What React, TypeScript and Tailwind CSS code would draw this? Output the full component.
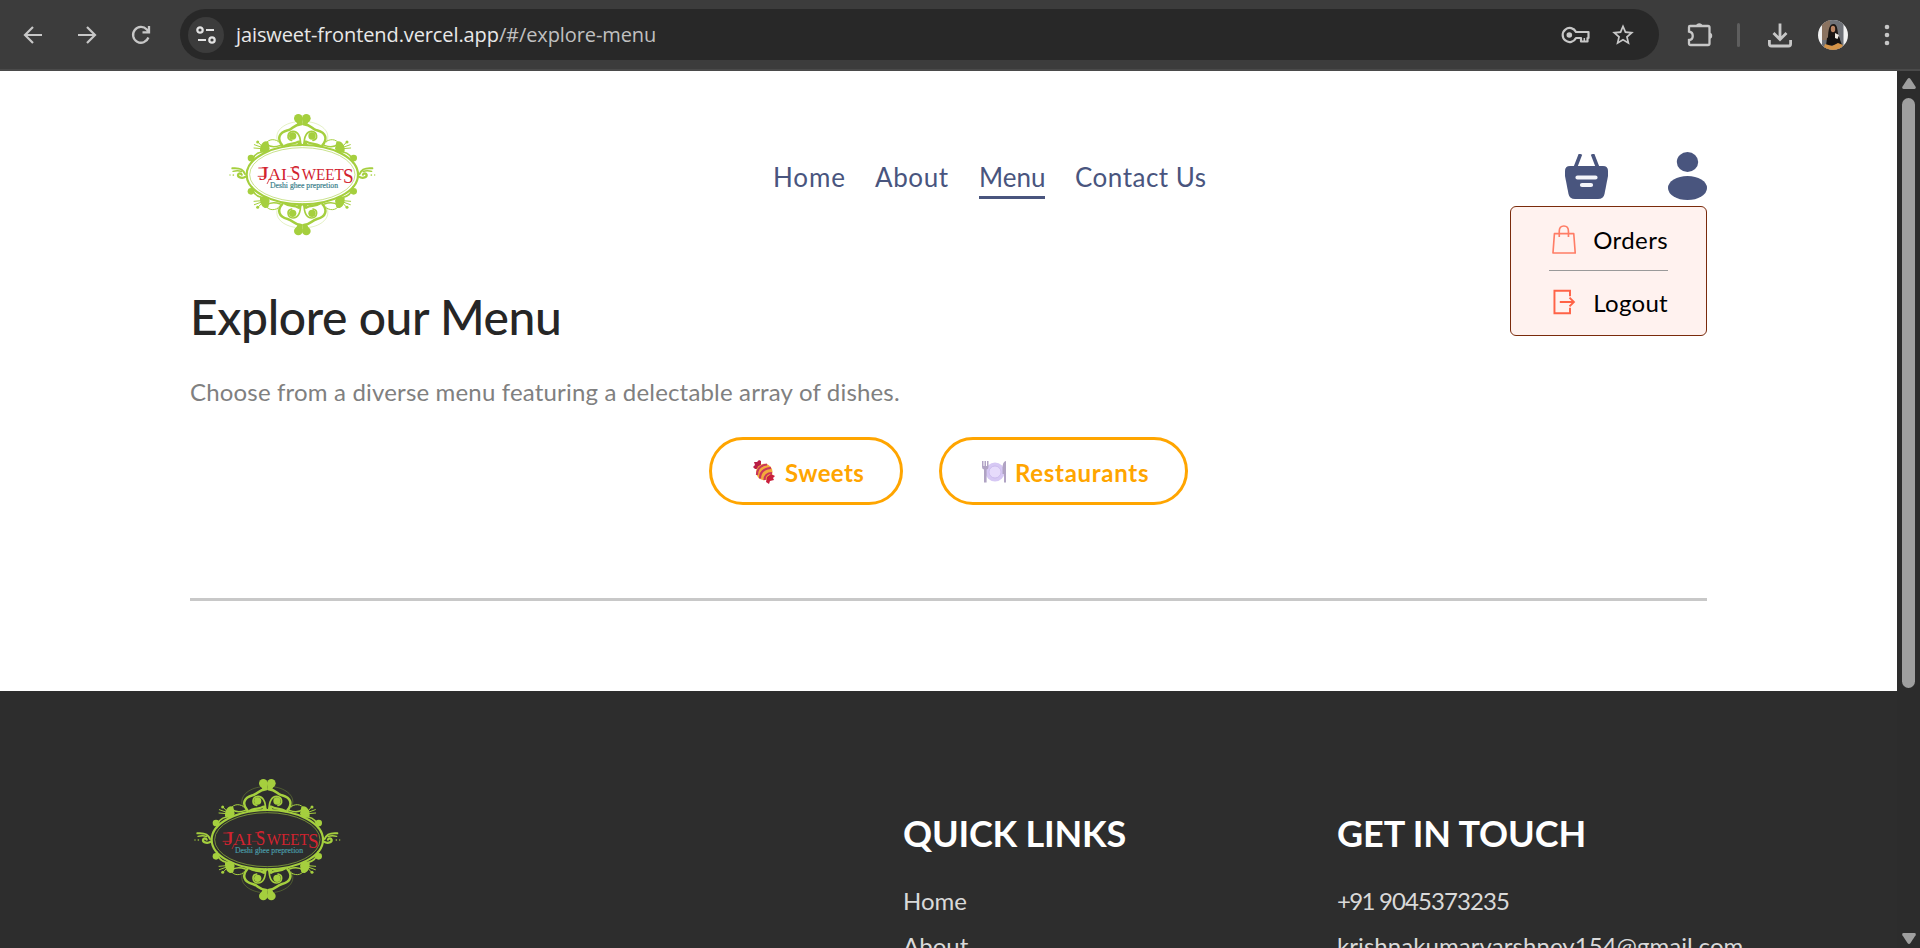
import React from "react";

const QUADRANTS = ["", "scale(-1 1)", "scale(1 -1)", "scale(-1 -1)"];

function Ornament() {
  return (
    <g fill="none" stroke="#a5cf3e" strokeLinecap="round">
      <circle cx="12" cy="-169" r="13" fill="#a5cf3e" stroke="none" />
      <path d="M0 -166 L20 -163 L14 -149 L0 -149 Z" fill="#a5cf3e" stroke="none" />
      <path d="M4 -151 C28 -149 26 -138 44 -133 C72 -126 76 -106 60 -88" strokeWidth="7.500" />
      <path d="M22 -158 C54 -154 90 -130 72 -96" strokeWidth="1.500" opacity=".6" />
      <path d="M5 -88 C5 -112 10 -129 28 -130 C46 -129 48 -106 32 -103" strokeWidth="5" />
      <circle cx="29" cy="-116" r="11" fill="#a5cf3e" stroke="none" />
      <path d="M12 -99 C24 -90 38 -97 54 -86" strokeWidth="7" />
      <path d="M0 -90 L9 -104 L17 -88 Z" fill="#a5cf3e" stroke="none" />
      <path d="M66 -88 C82 -82 96 -82 108 -92" strokeWidth="4.500" />
      <path d="M72 -100 C88 -110 108 -106 114 -84" strokeWidth="3" />
      <path d="M102 -98 C114 -106 128 -92 127 -70 C116 -60 102 -66 98 -78 Z" fill="#a5cf3e" stroke="none" />
      <path d="M122 -82 L144 -90 M122 -86 L134 -99 M122 -78 L145 -80" strokeWidth="3" />
      <circle cx="134" cy="-98" r="4.500" fill="#a5cf3e" stroke="none" />
      <path d="M122 -68 C136 -66 148 -56 152 -36" strokeWidth="5" />
      <circle cx="154" cy="-50" r="10" fill="#a5cf3e" stroke="none" />
    </g>
  );
}

function Logo({ teal }: { teal: string }) {
  return (
    <svg className="block h-[135px] w-[165px] shrink-0" viewBox="-247 -209 495 405">
      <g fill="none" stroke="#a5cf3e">
        <ellipse rx="167" ry="89" strokeWidth="6.500" />
        <ellipse rx="158" ry="81" strokeWidth="1.800" />
      </g>
      {QUADRANTS.map((t) => (
        <g key={t} transform={t}>
          <Ornament />
        </g>
      ))}
      {["", "scale(-1 1)"].map((t) => (
        <g key={t} transform={t} fill="none" stroke="#a5cf3e" strokeLinecap="round">
          <path d="M170 6 C178 12 193 10 193 1 C192 -5 184 -5 182 0" strokeWidth="7" />
          <path d="M172 -2 C178 -18 190 -21 210 -19" strokeWidth="6" />
          <path d="M182 -9 C192 -14 200 -12 208 -10" strokeWidth="4" />
          <circle cx="207" cy="1" r="2.500" fill="#a5cf3e" stroke="none" />
          <circle cx="217" cy="1" r="2" fill="#a5cf3e" stroke="none" />
        </g>
      ))}
      <g fontFamily="Liberation Serif, serif" fill="#d2232f">
        <text x="-130" y="16" fontSize="58" textLength="30" lengthAdjust="spacingAndGlyphs">J</text>
        <text x="-102" y="16" fontSize="52" textLength="56" lengthAdjust="spacingAndGlyphs">AI</text>
        <text x="-34" y="17" fontSize="62" textLength="28" lengthAdjust="spacingAndGlyphs">S</text>
        <text x="-2" y="16" fontSize="52" textLength="126" lengthAdjust="spacingAndGlyphs">WEET</text>
        <text x="122" y="26" fontSize="66" textLength="32" lengthAdjust="spacingAndGlyphs">S</text>
        <path d="M-132 -20 H-104 M-134 5 H-112 M-98 12 L-106 28 M-36 -21 H-10" fill="none" stroke="#d2232f" strokeWidth="2.500" />
        <path d="M-46 5 H-30" fill="none" stroke="#d2232f" strokeWidth="1.500" />
      </g>
      <text x="-97" y="41" fontSize="24" fontFamily="Liberation Serif, serif" fill={teal} stroke={teal} strokeWidth=".6" textLength="204" lengthAdjust="spacingAndGlyphs">
        Deshi ghee prepretion
      </text>
    </svg>
  );
}

function BrowserBar() {
  return (
    <div className="flex h-[71px] w-full shrink-0 items-center border-b-2 border-[#4a4a4a] bg-[#3c3c3c] text-[#c7c7c7]">
      <svg className="ml-[22px] size-[22px]" viewBox="0 0 22 22" fill="none" stroke="currentColor" strokeWidth="2.200">
        <path d="M20 11H3.500M11 3L3 11L11 19" />
      </svg>
      <svg className="ml-[32px] size-[22px]" viewBox="0 0 22 22" fill="none" stroke="currentColor" strokeWidth="2.200">
        <path d="M2 11H18.500M11 3L19 11L11 19" />
      </svg>
      <svg className="ml-[32px] size-[22px]" viewBox="0 0 22 22" fill="none" stroke="currentColor" strokeWidth="2.300">
        <path d="M18.400 13.500A7.900 7.900 0 1 1 16.800 5.500L18.500 7.500M19 2V8.300H12.500" />
      </svg>
      <div className="ml-[28px] flex h-[51px] w-[1479px] items-center rounded-full bg-[#282828] pl-[8px]">
        <div className="flex size-[36px] items-center justify-center rounded-full bg-[#3c3c3c]">
          <svg className="size-[20px]" viewBox="0 0 20 20" fill="none" stroke="#e3e3e3" strokeWidth="2.200">
            <circle cx="4" cy="5" r="2.700" />
            <path d="M10 5H18M2 15H10" />
            <circle cx="16" cy="15" r="2.700" />
          </svg>
        </div>
        <div className="ml-[12px] whitespace-nowrap font-['Open_Sans','Noto_Sans',sans-serif] text-[20px] leading-[30px] tracking-[-0.1px] text-[#e8e8e8]">
          jaisweet-frontend.vercel.app<span className="text-[#c0c0c0]">/#/explore-menu</span>
        </div>
        <svg className="ml-auto h-[18px] w-[29px]" viewBox="0 0 29 18" fill="none" stroke="#c7c7c7" strokeWidth="2.200">
          <path d="M15 6A7 7 0 1 0 15 12H20V15.500H26.500V12H27.500V6Z" strokeLinejoin="round" />
          <circle cx="8.300" cy="9" r="2.800" fill="#c7c7c7" stroke="none" />
          <path d="M23.300 12V15" strokeWidth="1.500" />
        </svg>
        <svg className="mr-[23px] ml-[20px] size-[26px]" viewBox="0 0 24 24" fill="#c7c7c7">
          <path d="M22 9.240l-7.190-.62L12 2 9.190 8.630 2 9.240l5.460 4.730L5.820 21 12 17.270 18.180 21l-1.630-7.030L22 9.240zM12 15.400l-3.760 2.270 1-4.280-3.320-2.880 4.380-.38L12 6.100l1.710 4.040 4.380.38-3.320 2.880 1 4.280L12 15.400z" />
        </svg>
      </div>
      <svg className="ml-[28px] size-[26px]" viewBox="0 0 26 26">
        <path d="M3 4H21Q22.500 4 22.500 5.500V21.500Q22.500 23 21 23H3.500Q2 23 2 21.500V18C7 17.500 7 10.500 2 9.500V5Q2 4 3 4Z" fill="none" stroke="#c7c7c7" strokeWidth="2.300" />
        <path d="M9 4A3.300 3.300 0 0 1 15.500 4ZM22.500 10.500A3.300 3.300 0 0 1 22.500 17Z" fill="#c7c7c7" />
      </svg>
      <div className="ml-[24px] h-[24px] w-[3px] rounded-full bg-[#5e5e5e]" />
      <svg className="ml-[27px] size-[26px]" viewBox="0 0 26 26" fill="none" stroke="#c7c7c7" strokeWidth="2.800">
        <path d="M13 1.500V17M6.500 11L13 17.500L19.500 11M2.400 18V22Q2.400 24 4.400 24H21.600Q23.600 24 23.600 22V18" />
      </svg>
      <svg className="ml-[25px] size-[30px]" viewBox="0 0 30 30">
        <defs>
          <clipPath id="avatar"><circle cx="15" cy="15" r="15" /></clipPath>
        </defs>
        <g clipPath="url(#avatar)">
          <rect width="30" height="30" fill="#f2f2f2" />
          <rect x="4" width="21.500" height="30" fill="#6f7278" />
          <rect x="4" width="8" height="20" fill="#8b7360" />
          <path d="M10 20C10 8 12 4 15.500 4C20 4 19 11 21 17L22 20Z" fill="#1b1512" />
          <ellipse cx="15" cy="9" rx="2.200" ry="3.200" fill="#b98362" />
          <path d="M8 26L9 18L13 16L21 17L24 25Z" fill="#151313" />
          <path d="M5 30L7 24L14 26L20 23L25 25L22 30Z" fill="#d49449" />
          <path d="M17 13L21 15L19.500 19L17 18Z" fill="#f0ebe3" />
        </g>
      </svg>
      <svg className="ml-[36px] h-[24px] w-[6px]" viewBox="0 0 6 24" fill="#c7c7c7">
        <circle cx="3" cy="4" r="2.300" />
        <circle cx="3" cy="12" r="2.300" />
        <circle cx="3" cy="20" r="2.300" />
      </svg>
    </div>
  );
}

function Candy() {
  return (
    <svg className="mt-[2px] size-[24px]" viewBox="0 0 24 24">
      <path d="M1 7L3 5L2 2L5 2L7 0L9 1L9 6L6 9L3 9Z" fill="#b81d45" />
      <circle cx="12.300" cy="12" r="8.300" fill="#f3ab3c" />
      <g fill="none" stroke="#c9355b" strokeWidth="2.200">
        <path d="M5 15C5 9 9 5 15 4.500" />
        <path d="M8 18.500C8 12 12 8.500 19 8" />
        <path d="M12.500 20C12.500 16 15 13 20 13" />
      </g>
      <path d="M17 24L14 22L15 17L19 14L23 16L21 18L22 20L18 21Z" fill="#c91f3d" />
    </svg>
  );
}

function Plate() {
  return (
    <svg className="mt-[2px] size-[24px]" viewBox="0 0 24 24">
      <circle cx="13" cy="12" r="9.500" fill="#d6c8f4" />
      <circle cx="13" cy="12" r="6" fill="#e6dbfb" stroke="#c6b5ea" strokeWidth=".8" />
      <path d="M0 1H1.500V6H2.500V1H4V6H5V1H6.500V7Q6.500 9 4.600 9.500V22.500H2V9.500Q0 9 0 7Z" fill="#b0a3c4" />
      <path d="M20.500 9C20.500 4 21.500 1.500 24 1V22.500H22V14H20.500Z" fill="#b0a3c4" />
    </svg>
  );
}

function Scrollbar() {
  return (
    <div className="flex w-[23px] shrink-0 flex-col items-center bg-[#2c2c2c] pt-[7px] pb-[4px]">
      <svg className="ml-px h-[11px] w-[14px]" viewBox="0 0 14 11" fill="#9f9f9f">
        <path d="M7 0Q7.800 0 8.500 1L13.600 8.800Q14.300 11 12.500 11H1.500Q-.3 11 .4 8.800L5.500 1Q6.200 0 7 0Z" />
      </svg>
      <div className="mt-[9px] h-[590px] w-[13px] rounded-full bg-[#9f9f9f]" />
      <svg className="mt-auto ml-px h-[11px] w-[14px] rotate-180" viewBox="0 0 14 11" fill="#9f9f9f">
        <path d="M7 0Q7.800 0 8.500 1L13.600 8.800Q14.300 11 12.500 11H1.500Q-.3 11 .4 8.800L5.500 1Q6.200 0 7 0Z" />
      </svg>
    </div>
  );
}

function AccountMenu() {
  return (
    <div className="absolute top-[54px] right-0 flex h-[130px] w-[197px] flex-col rounded-[6px] border border-[#7a2b0c] bg-[#fff2ef] pr-[38px] pl-[38px] text-[24px] leading-[30px] text-black">
      <div className="flex h-[64px] items-center border-b border-[#9a9a9a] pt-[3px]">
        <svg className="-mt-[2px] ml-[3px] h-[31px] w-[25px]" viewBox="0 0 25 31" fill="none" stroke="#ff7d66" strokeWidth="1.700" strokeLinejoin="round">
          <path d="M2.500 9.500H22.500L24 29.500H1Z" />
          <path d="M7.500 13V7Q7.500 1.500 12.300 1.500Q17 1.500 17 7V13" />
        </svg>
        <div className="ml-[17px] whitespace-nowrap tracking-[0.4px]">Orders</div>
      </div>
      <div className="flex h-[62px] items-center">
        <svg className="mr-px ml-[4px] h-[26px] w-[24px]" viewBox="0 0 24 26" fill="none" stroke="#ff6347" strokeWidth="2">
          <path d="M17.500 7V1.500H1.500V24.500H17.500V19M7 13H21M17 8.500L21.500 13L17 17.500" />
        </svg>
        <div className="mt-[2px] ml-[16px] whitespace-nowrap tracking-[0.3px]">Logout</div>
      </div>
    </div>
  );
}

function Header() {
  return (
    <header className="flex h-[135px] items-start">
      <div className="ml-[30px]"><Logo teal="#3c7f8c" /></div>
      <nav className="mt-[55px] ml-[388px] flex gap-[30px] whitespace-nowrap text-[26px] leading-[34px] text-[#49557e]">
        <div className="w-[72px] tracking-[0.9px]">Home</div>
        <div className="w-[74px] tracking-[0.6px]">About</div>
        <div className="w-[66px] border-b-3 border-[#49557e] pb-[2px]">Menu</div>
        <div className="w-[132px] tracking-[0.5px]">Contact Us</div>
      </nav>
      <div className="relative mt-[47px] ml-auto flex gap-[60px]">
        <svg className="mt-[2px] h-[45px] w-[43px]" viewBox="0 0 43 45" fill="#49557e">
          <path d="M10.500 13L15.500 0M32.500 13L27.500 0" stroke="#49557e" strokeWidth="3.600" />
          <path d="M5 12H38Q43 12 43 17V22L39.500 40Q38.500 45 33 45H10Q4.500 45 3.500 40L0 22V17Q0 12 5 12Z" />
          <path d="M12.500 23.500H30.500M17 31H26" stroke="#f4f5fa" strokeWidth="4.200" strokeLinecap="round" />
        </svg>
        <svg className="h-[48px] w-[39px]" viewBox="0 0 39 48" fill="#49557e">
          <ellipse cx="19.500" cy="10" rx="10.700" ry="10" />
          <ellipse cx="19.500" cy="36" rx="19.500" ry="12" />
        </svg>
        <AccountMenu />
      </div>
    </header>
  );
}

export default function App() {
  return (
    <div className="flex h-[948px] w-full flex-col overflow-hidden bg-[#2d2d2d] font-[Lato,sans-serif]">
      <BrowserBar />
      <div className="flex min-h-0 flex-1">
        <div className="flex min-w-0 flex-1 flex-col overflow-hidden">
          <main className="h-[620px] shrink-0 bg-white px-[190px] pt-[34px]">
            <Header />
            <h1 className="mt-[47px] text-[48px] leading-[60px] font-medium tracking-[-0.4px] text-[#262626]">Explore our Menu</h1>
            <p className="mt-[30px] text-[24px] leading-[30px] tracking-[0.17px] text-[#808080]">
              Choose from a diverse menu featuring a delectable array of dishes.
            </p>
            <div className="mt-[30px] ml-[519px] flex gap-[36px] text-[24px] font-bold whitespace-nowrap text-[#ffa500]">
              <button className="flex h-[68px] w-[194px] items-center rounded-full border-3 border-[#ffa500] pl-[40px]">
                <Candy />
                <span className="mt-[3px] ml-[9px] tracking-[0.4px]">Sweets</span>
              </button>
              <button className="flex h-[68px] w-[249px] items-center rounded-full border-3 border-[#ffa500] pl-[40px]">
                <Plate />
                <span className="mt-[3px] ml-[9px] tracking-[0.7px]">Restaurants</span>
              </button>
            </div>
            <div className="mt-[93px] h-[3px] w-[1517px] bg-[#c8c8c8]" />
          </main>
          <footer className="flex flex-1 items-start bg-[#2d2d2d] pl-[185px] whitespace-nowrap">
            <div className="mt-[79px]"><Logo teal="#4a9aa5" /></div>
            <div className="mt-[120px] ml-[553px] w-[434px] text-[24px] leading-[30px] text-[#d9d9d9]">
              <h2 className="text-[36px] leading-[44px] font-bold tracking-[-0.2px] text-white">QUICK LINKS</h2>
              <div className="mt-[31px]">Home</div>
              <div className="mt-[15px]">About</div>
            </div>
            <div className="mt-[120px] text-[24px] leading-[30px] text-[#d9d9d9]">
              <h2 className="text-[36px] leading-[44px] font-bold tracking-[-0.1px] text-white">GET IN TOUCH</h2>
              <div className="mt-[31px] tracking-[-0.9px]"><span className="tracking-[-1.7px]">+91</span> 9045373235</div>
              <div className="mt-[15px] tracking-[0.07px]">krishnakumarvarshney154@gmail.com</div>
            </div>
          </footer>
        </div>
        <Scrollbar />
      </div>
    </div>
  );
}
